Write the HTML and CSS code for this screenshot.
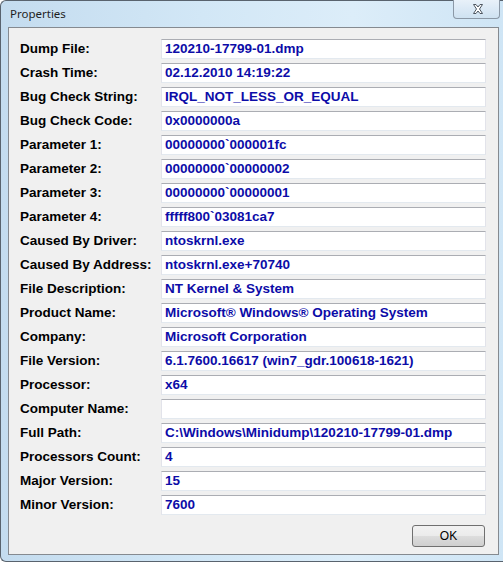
FILE: index.html
```html
<!DOCTYPE html>
<html>
<head>
<meta charset="utf-8">
<link rel="stylesheet" href="styles.css">
</head>
<body>
<div class="window">
  <div class="titlebar">
    <span class="title">Properties</span>
    <div class="close">
      <svg width="12" height="10" viewBox="0 0 12 10"><path d="M1.5 0.5 H4 L6 3 L8 0.5 H10.5 L7.5 5 L10.5 9.5 H8 L6 7 L4 9.5 H1.5 L4.5 5 Z" fill="#ffffff" stroke="#4d5660" stroke-width="1" stroke-linejoin="round"/></svg>
    </div>
  </div>
  <div class="client">
    <div class="grid">
      <div class="label">Dump File:</div><div class="field">120210-17799-01.dmp</div>
      <div class="label">Crash Time:</div><div class="field">02.12.2010 14:19:22</div>
      <div class="label">Bug Check String:</div><div class="field">IRQL_NOT_LESS_OR_EQUAL</div>
      <div class="label">Bug Check Code:</div><div class="field">0x0000000a</div>
      <div class="label">Parameter 1:</div><div class="field">00000000`000001fc</div>
      <div class="label">Parameter 2:</div><div class="field">00000000`00000002</div>
      <div class="label">Parameter 3:</div><div class="field">00000000`00000001</div>
      <div class="label">Parameter 4:</div><div class="field">fffff800`03081ca7</div>
      <div class="label">Caused By Driver:</div><div class="field">ntoskrnl.exe</div>
      <div class="label">Caused By Address:</div><div class="field">ntoskrnl.exe+70740</div>
      <div class="label">File Description:</div><div class="field">NT Kernel &amp; System</div>
      <div class="label">Product Name:</div><div class="field">Microsoft® Windows® Operating System</div>
      <div class="label">Company:</div><div class="field">Microsoft Corporation</div>
      <div class="label">File Version:</div><div class="field">6.1.7600.16617 (win7_gdr.100618-1621)</div>
      <div class="label">Processor:</div><div class="field">x64</div>
      <div class="label">Computer Name:</div><div class="field"></div>
      <div class="label">Full Path:</div><div class="field">C:\Windows\Minidump\120210-17799-01.dmp</div>
      <div class="label">Processors Count:</div><div class="field">4</div>
      <div class="label">Major Version:</div><div class="field">15</div>
      <div class="label">Minor Version:</div><div class="field">7600</div>
    </div>
    <div class="buttons">
      <button class="ok">OK</button>
    </div>
  </div>
</div>
</body>
</html>
```
FILE: styles.css
```css
html, body {
  margin: 0;
  padding: 0;
  background: #ffffff;
  overflow: hidden;
}
.window {
  box-sizing: border-box;
  width: 503px;
  height: 562px;
  border: 1px solid #59636e;
  border-right: none;
  border-radius: 6px 0 0 6px;
  padding: 0 4px 6px 7px;
  background: linear-gradient(90deg, #c4dcef 0%, #d2e7f6 40%, #dcedf9 70%, #cfe5f5 100%);
  display: flex;
  flex-direction: column;
}
.titlebar {
  height: 26px;
  display: flex;
  align-items: flex-start;
}
.title {
  font-family: "Noto Sans", "Open Sans", sans-serif;
  font-size: 11.5px;
  color: #1e1e1e;
  line-height: 25px;
  padding-left: 2px;
}
.close {
  margin-left: auto;
  margin-right: -1px;
  margin-top: -1px;
  box-sizing: border-box;
  width: 47px;
  height: 19px;
  border: 1px solid #8b98a6;
  border-top: none;
  border-radius: 0 0 4px 4px;
  background: linear-gradient(180deg, #e8f1f9 0%, #dbe9f5 50%, #cfe2f1 100%);
  display: flex;
  align-items: center;
  justify-content: center;
  padding-left: 3px;
}
.close svg { display: block; }
.client {
  box-sizing: border-box;
  height: 528px;
  border: 1px solid #858a90;
  background: #f0f0f0;
  padding: 11px 12px 0 11px;
  display: flex;
  flex-direction: column;
}
.grid {
  display: grid;
  grid-template-columns: 141px 1fr;
  row-gap: 4px;
}
.label, .field {
  font-family: "Liberation Sans", Arial, sans-serif;
  font-weight: bold;
  font-size: 13.5px;
  height: 20px;
  line-height: 20px;
  white-space: nowrap;
}
.label {
  color: #000000;
}
.field {
  box-sizing: border-box;
  background: #ffffff;
  border: 1px solid #e2e3ea;
  border-top-color: #abadb3;
  border-bottom-color: #e3e9ef;
  padding-left: 3px;
  line-height: 18px;
  color: #0c0ca8;
  overflow: hidden;
}
.buttons {
  display: flex;
  justify-content: flex-end;
  margin-top: 10px;
  padding-right: 1px;
}
.ok {
  box-sizing: border-box;
  width: 73px;
  height: 22px;
  border: 1px solid #707070;
  border-radius: 3px;
  background: linear-gradient(180deg, #f2f2f2 0%, #ebebeb 50%, #dddddd 51%, #cfcfcf 100%);
  font-family: "Liberation Sans", Arial, sans-serif;
  font-size: 12px;
  color: #000;
  padding: 0;
  margin: 0;
}
```
